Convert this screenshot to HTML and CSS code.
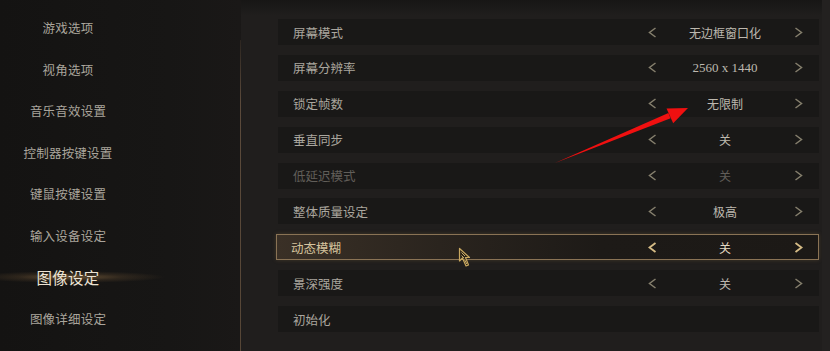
FILE: index.html
```html
<!DOCTYPE html>
<html lang="zh-CN">
<head>
<meta charset="utf-8">
<title>图像设定</title>
<link rel="stylesheet" href="styles.css">
</head>
<body>
<div class="screen">
  <nav class="sidebar">
    <ul class="nav">
      <li class="nav-item">游戏选项</li>
      <li class="nav-item">视角选项</li>
      <li class="nav-item">音乐音效设置</li>
      <li class="nav-item">控制器按键设置</li>
      <li class="nav-item">键鼠按键设置</li>
      <li class="nav-item">输入设备设定</li>
      <li class="nav-item active">图像设定</li>
      <li class="nav-item">图像详细设定</li>
    </ul>
    <div class="divider"></div>
  </nav>
  <main class="panel">
    <div class="rows">
      <div class="row"><span class="label">屏幕模式</span><div class="ctrl"><svg class="chev" viewBox="0 0 9 11"><polyline points="7.5,1 1.5,5.5 7.5,10"/></svg><span class="value">无边框窗口化</span><svg class="chev" viewBox="0 0 9 11"><polyline points="1.5,1 7.5,5.5 1.5,10"/></svg></div></div>
      <div class="row"><span class="label">屏幕分辨率</span><div class="ctrl"><svg class="chev" viewBox="0 0 9 11"><polyline points="7.5,1 1.5,5.5 7.5,10"/></svg><span class="value num">2560 x 1440</span><svg class="chev" viewBox="0 0 9 11"><polyline points="1.5,1 7.5,5.5 1.5,10"/></svg></div></div>
      <div class="row"><span class="label">锁定帧数</span><div class="ctrl"><svg class="chev" viewBox="0 0 9 11"><polyline points="7.5,1 1.5,5.5 7.5,10"/></svg><span class="value">无限制</span><svg class="chev" viewBox="0 0 9 11"><polyline points="1.5,1 7.5,5.5 1.5,10"/></svg></div></div>
      <div class="row"><span class="label">垂直同步</span><div class="ctrl"><svg class="chev" viewBox="0 0 9 11"><polyline points="7.5,1 1.5,5.5 7.5,10"/></svg><span class="value">关</span><svg class="chev" viewBox="0 0 9 11"><polyline points="1.5,1 7.5,5.5 1.5,10"/></svg></div></div>
      <div class="row disabled"><span class="label">低延迟模式</span><div class="ctrl"><svg class="chev" viewBox="0 0 9 11"><polyline points="7.5,1 1.5,5.5 7.5,10"/></svg><span class="value">关</span><svg class="chev" viewBox="0 0 9 11"><polyline points="1.5,1 7.5,5.5 1.5,10"/></svg></div></div>
      <div class="row"><span class="label">整体质量设定</span><div class="ctrl"><svg class="chev" viewBox="0 0 9 11"><polyline points="7.5,1 1.5,5.5 7.5,10"/></svg><span class="value">极高</span><svg class="chev" viewBox="0 0 9 11"><polyline points="1.5,1 7.5,5.5 1.5,10"/></svg></div></div>
      <div class="row selected"><span class="label">动态模糊</span><div class="ctrl"><svg class="chev" viewBox="0 0 9 11"><polyline points="7.5,1 1.5,5.5 7.5,10"/></svg><span class="value">关</span><svg class="chev" viewBox="0 0 9 11"><polyline points="1.5,1 7.5,5.5 1.5,10"/></svg></div></div>
      <div class="row"><span class="label">景深强度</span><div class="ctrl"><svg class="chev" viewBox="0 0 9 11"><polyline points="7.5,1 1.5,5.5 7.5,10"/></svg><span class="value">关</span><svg class="chev" viewBox="0 0 9 11"><polyline points="1.5,1 7.5,5.5 1.5,10"/></svg></div></div>
      <div class="row"><span class="label">初始化</span></div>
    </div>
    <div class="scroll-strip"></div>
  </main>

  <svg class="annot-arrow" viewBox="0 0 830 351" width="830" height="351">
    <polygon points="555,163 670.6,118.3 668.4,113.1" fill="#f01010"/>
    <polygon points="688,108 666.5,108.6 673.2,123.2" fill="#f01010"/>
  </svg>

  <svg class="cursor" viewBox="0 0 14 22" width="14" height="22">
    <path d="M1.5 1.5 L1.5 14 L4.5 11 L8 19 L10.5 18 L7.5 10.5 L11.5 10.5 Z" fill="#2a2216" stroke="#c9a860" stroke-width="1.2" stroke-linejoin="round"/>
    <path d="M3.5 5.5 L7 9 M3.5 8.5 L6 11 M6.5 12.5 L8.8 17" stroke="#d8bb74" stroke-width="0.9" fill="none"/>
  </svg>
</div>
</body>
</html>
```

FILE: styles.css
```css
* { box-sizing: border-box; }
html, body {
  margin: 0;
  padding: 0;
  width: 830px;
  height: 351px;
  overflow: hidden;
  background: #141312;
}
.screen {
  position: relative;
  width: 830px;
  height: 351px;
  display: flex;
  font-family: "Noto Sans CJK SC", "Noto Sans", sans-serif;
  background: #151413;
}
.sidebar {
  width: 241px;
  display: flex;
  background: linear-gradient(90deg, #141312 0%, #171615 70%, #1a1817 100%);
}
.nav {
  list-style: none;
  margin: 0;
  padding: 7px 0 0 0;
  width: 136px;
}
.nav-item {
  height: 41.5px;
  display: flex;
  align-items: center;
  justify-content: center;
  font-size: 12.5px;
  color: #aaa59c;
  letter-spacing: 0.2px;
}
.nav-item.active {
  font-size: 15.5px;
  color: #ece3d3;
  background: radial-gradient(ellipse 95px 6px at 70px 50%, rgba(170, 130, 80, 0.55) 0%, rgba(120, 90, 55, 0.25) 55%, rgba(0,0,0,0) 100%);
  width: 170px;
  padding-right: 34px;
}
.divider {
  margin-left: auto;
  width: 1px;
  margin-top: 40px;
  background: linear-gradient(180deg, rgba(120, 95, 70, 0.2) 0%, #5b4a3b 20%, #564636 100%);
}
.panel {
  flex: 1;
  display: flex;
  background: linear-gradient(180deg, #171615 0px, #201e1d 16px, #201e1d 100%);
  padding-left: 37px;
}
.rows {
  width: 541px;
  padding-top: 19px;
  display: flex;
  flex-direction: column;
  gap: 9.9px;
}
.row {
  height: 26px;
  display: flex;
  align-items: center;
  background: #191817;
  padding-left: 15px;
}
.label {
  font-size: 12.5px;
  color: #aaa69e;
}
.ctrl {
  margin-left: auto;
  margin-right: 14px;
  width: 160px;
  display: grid;
  grid-template-columns: 14px 1fr 14px;
  align-items: center;
}
.chev {
  width: 9px;
  height: 11px;
  justify-self: center;
}
.chev polyline {
  fill: none;
  stroke: #857f6d;
  stroke-width: 1.5;
}
.value {
  text-align: center;
  font-size: 12px;
  color: #bdb8af;
}
.value.num {
  font-family: "Liberation Serif", serif;
  font-size: 13px;
}
.row.disabled .label,
.row.disabled .value { color: #615e59; }
.row.selected {
  border: 1px solid #8a7355;
  padding-left: 14px;
  margin-left: -2px;
  width: 543px;
  background: linear-gradient(90deg, #3a3026 0%, #2a241e 30%, #1d1a17 60%, #1c1916 100%);
  box-shadow: 0 0 4px rgba(120, 95, 60, 0.4);
}
.row.selected .label { color: #d6c49e; }
.row.selected .value { color: #e2d8c2; }
.row.selected .chev polyline { stroke: #d6bc86; stroke-width: 1.8; }
.row.selected .ctrl { margin-right: 13px; }
.scroll-strip {
  margin-left: auto;
  width: 8px;
  background: #232120;
}
.annot-arrow {
  position: absolute;
  left: 0;
  top: 0;
  pointer-events: none;
}
.cursor {
  position: absolute;
  left: 458px;
  top: 247px;
}
```
